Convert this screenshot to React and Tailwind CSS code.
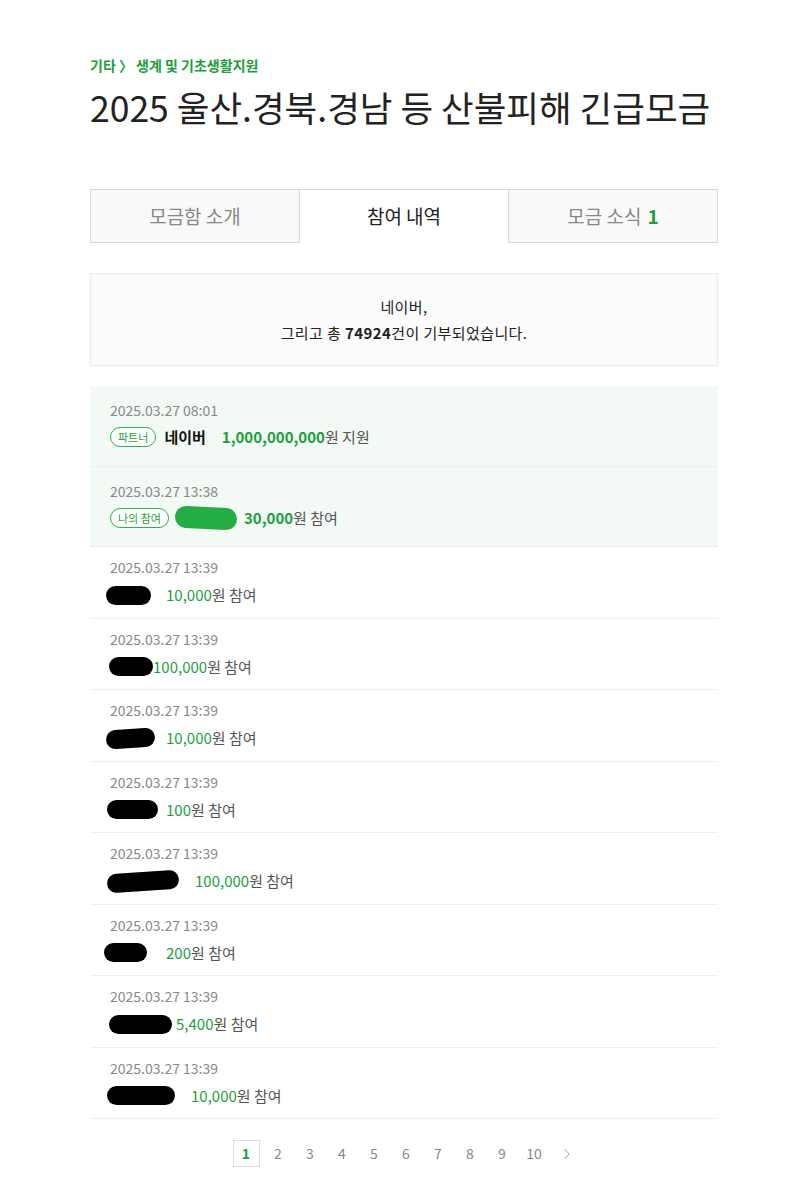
import React from 'react';
import { ChevronRight } from 'lucide-react';

const font = { fontFamily: '"Noto Sans CJK KR", "Noto Sans", sans-serif' };

const rows = [
    { time: '2025.03.27 13:39', blob: 'w-[45px] -ml-[4px]', gap: 'ml-[15px]', amount: '10,000' },
    { time: '2025.03.27 13:39', blob: 'w-[44px] -ml-[1px]', gap: 'ml-0', amount: '100,000' },
    { time: '2025.03.27 13:39', blob: 'w-[49px] -ml-[4px] rotate-[-4deg]', gap: 'ml-[11px]', amount: '10,000' },
    { time: '2025.03.27 13:39', blob: 'w-[51px] -ml-[3px]', gap: 'ml-[8px]', amount: '100' },
    { time: '2025.03.27 13:39', blob: 'w-[72px] -ml-[3px] rotate-[-4deg]', gap: 'ml-[16px]', amount: '100,000' },
    { time: '2025.03.27 13:39', blob: 'w-[43px] -ml-[6px]', gap: 'ml-[19px]', amount: '200' },
    { time: '2025.03.27 13:39', blob: 'w-[63px] -ml-[1px]', gap: 'ml-[4px]', amount: '5,400' },
    { time: '2025.03.27 13:39', blob: 'w-[68px] -ml-[3px]', gap: 'ml-[16px]', amount: '10,000' },
];

const Tabs = () => (
    <div className="mt-[59px] flex h-[54px] text-[19px]">
        <div className="flex-1 flex items-center justify-center border border-[#d9d9d9] bg-[#f9f9fa] text-[#888]">
            모금함 소개
        </div>
        <div className="flex-1 flex items-center justify-center border border-b-0 border-l-0 border-[#d9d9d9] bg-white text-[#222]">
            참여 내역
        </div>
        <div className="flex-1 flex items-center justify-center border border-l-0 border-[#d9d9d9] bg-[#f9f9fa] text-[#888]">
            모금 소식 <span className="ml-[6px] font-bold text-[#1c9e3e]">1</span>
        </div>
    </div>
);

const Badge = ({ children }) => (
    <span className="inline-flex h-[20px] items-center rounded-full border border-[#2bb24c] bg-white px-[7px] text-[11px] leading-none text-[#1c9e3e]">
        {children}
    </span>
);

export default function App() {
    return (
        <div className="min-h-[1204px] bg-white" style={font}>
            <div className="ml-[90px] w-[628px] pt-[55px] pb-[30px]">
                <div className="text-[14px] font-bold text-[#1c9e3e]">
                    기타 〉 생계 및 기초생활지원
                </div>
                <h1 className="mt-[8px] whitespace-nowrap text-[35.5px] font-normal leading-[46px] text-[#222]">
                    2025 울산.경북.경남 등 산불피해 긴급모금
                </h1>

                <Tabs />

                <div className="mt-[30px] flex h-[93px] flex-col items-center justify-center border border-[#ebebeb] bg-[#fbfbfb] text-[15px] leading-[26px] tracking-[0.4px] text-[#222]">
                    <p>네이버,</p>
                    <p>
                        그리고 총 <span className="font-bold">74924</span>건이 기부되었습니다.
                    </p>
                </div>

                <ul className="mt-[20px]">
                    <li className="h-[81px] border-b border-[#e9f1ea] bg-[#f3f9f4] pl-[20px] pt-[14px]">
                        <div className="text-[14px] text-[#888]">2025.03.27 08:01</div>
                        <div className="mt-[5px] flex items-center text-[15px]">
                            <Badge>파트너</Badge>
                            <span className="ml-[8px] font-bold text-[#111]">네이버</span>
                            <span className="ml-[16px] font-bold text-[#1c9e3e]">1,000,000,000</span>
                            <span className="text-[#555]">원 지원</span>
                        </div>
                    </li>
                    <li className="h-[80px] border-b border-[#eee] bg-[#f3f9f4] pl-[20px] pt-[14px]">
                        <div className="text-[14px] text-[#888]">2025.03.27 13:38</div>
                        <div className="mt-[5px] flex items-center text-[15px]">
                            <Badge>나의 참여</Badge>
                            <span className="ml-[6px] inline-block h-[22px] w-[62px] rounded-full bg-[#24ad45] rotate-[3deg]" />
                            <span className="ml-[7px] font-bold text-[#1c9e3e]">30,000</span>
                            <span className="text-[#555]">원 참여</span>
                        </div>
                    </li>
                    {rows.map((r, i) => (
                        <li key={i} className="h-[71.5px] border-b border-[#eee] pl-[20px] pt-[10px]">
                            <div className="text-[14px] text-[#888]">{r.time}</div>
                            <div className="mt-[6px] flex items-center text-[15px]">
                                <span className={`inline-block h-[19px] rounded-full bg-black ${r.blob}`} />
                                <span className={`${r.gap} text-[#1c9e3e]`}>{r.amount}</span>
                                <span className="text-[#555]">원 참여</span>
                            </div>
                        </li>
                    ))}
                </ul>

                <div className="mt-[21px] flex items-center justify-center gap-[5px] text-[14px] text-[#888]">
                    <span className="flex h-[27px] w-[27px] items-center justify-center border border-[#ddd] font-bold text-[#1c9e3e]">1</span>
                    {['2', '3', '4', '5', '6', '7', '8', '9', '10'].map((n) => (
                        <span key={n} className="flex h-[27px] w-[27px] items-center justify-center">{n}</span>
                    ))}
                    <ChevronRight size={18} strokeWidth={1.3} className="ml-[5px] text-[#999]" />
                </div>
            </div>
        </div>
    );
}
